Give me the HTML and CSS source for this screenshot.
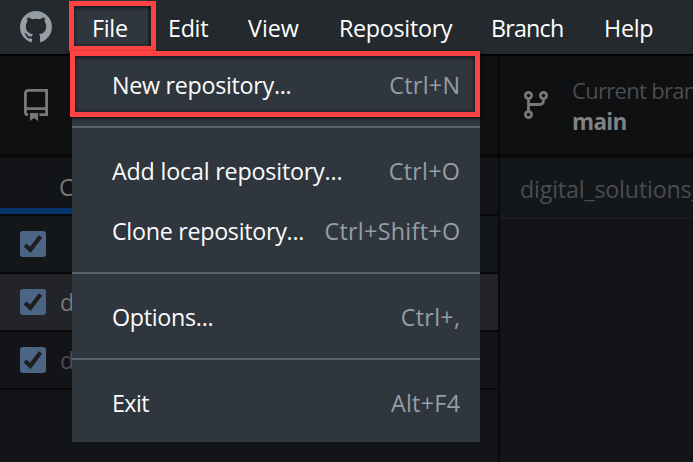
FILE: index.html
```html
<!DOCTYPE html>
<html lang="en">
<head>
<meta charset="utf-8">
<title>GitHub Desktop</title>
<link rel="stylesheet" href="styles.css">
</head>
<body>
<div class="app">
  <header class="titlebar">
    <svg class="logo" viewBox="0 0 16 16"><path d="M8 0C3.58 0 0 3.58 0 8c0 3.54 2.29 6.53 5.47 7.59.4.07.55-.17.55-.38 0-.19-.01-.82-.01-1.49-2.01.37-2.53-.49-2.69-.94-.09-.23-.48-.94-.82-1.13-.28-.15-.68-.52-.01-.53.63-.01 1.08.58 1.23.82.72 1.21 1.87.87 2.33.66.07-.52.28-.87.51-1.07-1.78-.2-3.64-.89-3.64-3.95 0-.87.31-1.59.82-2.15-.08-.2-.36-1.02.08-2.12 0 0 .67-.21 2.2.82.64-.18 1.32-.27 2-.27s1.36.09 2 .27c1.53-1.04 2.2-.82 2.2-.82.44 1.1.16 1.92.08 2.12.51.56.82 1.27.82 2.15 0 3.07-1.87 3.75-3.65 3.95.29.25.54.73.54 1.48 0 1.07-.01 1.93-.01 2.2 0 .21.15.46.55.38A8.01 8.01 0 0 0 16 8c0-4.42-3.58-8-8-8z"/></svg>
    <nav class="menubar">
      <span class="menu-title active file">File</span>
      <span class="menu-title edit">Edit</span>
      <span class="menu-title view">View</span>
      <span class="menu-title repo">Repository</span>
      <span class="menu-title branch">Branch</span>
      <span class="menu-title help">Help</span>
    </nav>
  </header>
  <section class="toolbar">
    <div class="tool-repo">
      <svg class="icon-repo" viewBox="0 0 24 32"><path fill="none" stroke="currentColor" stroke-width="2.8" d="M4.2 25.6H3.4Q1.4 25.6 1.4 23.6V4.4Q1.4 1.4 4.4 1.4H22.6V25.6H15.4M1.4 19.6H22.6"/><path fill="currentColor" d="M6 24h8v8l-4-3-4 3z"/></svg>
    </div>
    <div class="tool-branch">
      <svg class="icon-branch" viewBox="0 0 24 28"><g fill="none" stroke="currentColor" stroke-width="2.8"><circle cx="4.5" cy="4.5" r="3.1"/><circle cx="19.5" cy="4.5" r="3.1"/><circle cx="4.5" cy="23.5" r="3.1"/><path d="M4.5 7.5v13M19.5 7.5v1.8q0 4.2-4.2 4.2H4.5"/></g></svg>
      <div class="branch-label"><span class="caption">Current branch</span><strong>main</strong></div>
    </div>
  </section>
  <main class="workspace">
    <aside class="sidebar">
      <div class="tabs"><div class="tab">C</div></div>
      <div class="row summary"><span class="check"><svg viewBox="0 0 26 26"><path d="M5 14l5.3 4.8L20.5 5.5"/></svg></span></div>
      <div class="row selected"><span class="check"><svg viewBox="0 0 26 26"><path d="M5 14l5.3 4.8L20.5 5.5"/></svg></span><span class="name">d</span></div>
      <div class="row"><span class="check"><svg viewBox="0 0 26 26"><path d="M5 14l5.3 4.8L20.5 5.5"/></svg></span><span class="name">d</span></div>
    </aside>
    <section class="diff"><div class="path">digital_solutions_</div></section>
  </main>
  <div class="dropdown">
    <div class="item"><span class="label">New repository...</span><kbd>Ctrl+N</kbd></div>
    <hr>
    <div class="item"><span class="label add">Add local repository...</span><kbd>Ctrl+O</kbd></div>
    <div class="item"><span class="label">Clone repository...</span><kbd>Ctrl+Shift+O</kbd></div>
    <hr>
    <div class="item"><span class="label">Options...</span><kbd>Ctrl+,</kbd></div>
    <hr>
    <div class="item"><span class="label exit">Exit</span><kbd>Alt+F4</kbd></div>
  </div>
  <div class="mark mark-file"></div>
  <div class="mark mark-new"></div>
</div>
</body>
</html>
```
FILE: styles.css
```css
* { box-sizing: border-box; }
body { margin: 0; background: #131417; font-family: "Open Sans", "Noto Sans", sans-serif; font-size: 23.3px; }
.app { position: relative; width: 693px; height: 462px; overflow: hidden; display: flex; flex-direction: column; white-space: nowrap; }
.titlebar { flex: none; height: 56px; display: flex; background: #24292e; border-bottom: 2px solid #000; }
.logo { width: 32px; height: 32px; margin: 11px 20px 0; fill: #959da5; }
.menubar { display: flex; color: #fff; }
.menu-title { height: 54px; padding-left: 20px; line-height: 57px; letter-spacing: -0.3px; }
.active { background: #2f363d; }
.file { width: 76px; }
.edit { width: 80px; }
.view { width: 91px; letter-spacing: 0; }
.repo { width: 152px; }
.branch { width: 113px; letter-spacing: -0.8px; }
.toolbar { flex: none; height: 102px; display: flex; background: #0f1011; border-bottom: 4px solid #09090a; }
.tool-repo { flex: none; width: 500px; border-right: 2px solid #09090a; padding: 33px 0 0 24px; }
.icon-repo { display: block; width: 24px; height: 32px; color: #77787a; }
.tool-branch { flex: 1; min-width: 0; display: flex; padding-left: 24px; }
.icon-branch { flex: none; width: 24px; height: 28px; margin-top: 35px; color: #77787a; }
.branch-label { display: flex; flex-direction: column; margin-left: 24px; padding-top: 18px; line-height: 32px; letter-spacing: -0.7px; color: #808183; }
.branch-label strong { font-size: 22.5px; }
.caption { font-size: 22px; color: #4a4c50; }
.workspace { flex: 1; display: flex; }
.sidebar { flex: none; width: 500px; border-right: 2px solid #09090a; }
.tabs { display: flex; height: 58px; border-bottom: 2px solid #09090a; }
.tab { width: 250px; padding-left: 59px; line-height: 58px; color: #77787a; border-bottom: 6px solid #05326b; }
.row { display: flex; align-items: center; height: 58px; padding-left: 20px; border-bottom: 2px solid #09090a; color: #4a4c50; }
.summary { background: #141719; }
.selected { background: #222428; color: #77787a; }
.check { width: 26px; height: 26px; border-radius: 3px; background: #4c6584; }
.check svg { display: block; fill: none; stroke: #1c1e20; stroke-width: 4.2; }
.name { margin-left: 14px; }
.diff { flex: 1; min-width: 0; overflow: hidden; }
.path { height: 61px; padding-left: 20px; line-height: 63px; letter-spacing: -0.2px; background: #141719; border-bottom: 2px solid #191b1e; color: #4a4c50; }
.dropdown { position: absolute; left: 72px; top: 54px; width: 408px; height: 388px; padding-top: 2px; background: #2f363d; color: #fafbfc; }
.item { display: flex; justify-content: space-between; height: 60px; line-height: 58px; padding: 0 20px 0 40px; }
.label { letter-spacing: -0.3px; }
.add { letter-spacing: -0.2px; }
.exit { letter-spacing: -0.6px; }
.item kbd { font-family: inherit; letter-spacing: 0.3px; margin-right: -0.3px; color: #959da5; }
hr { height: 2px; margin: 10px 0 14px; border: 0; background: #586069; }
.mark { position: absolute; border: 5px solid #ff4242; box-shadow: 0 1px 3px #000b, inset 0 1px 4px #000b; }
.mark-file { left: 69px; top: 1px; width: 87px; height: 50px; box-shadow: inset 0 1px 4px #000b; }
.mark-new { left: 70px; top: 51px; width: 410px; height: 66px; }
```
